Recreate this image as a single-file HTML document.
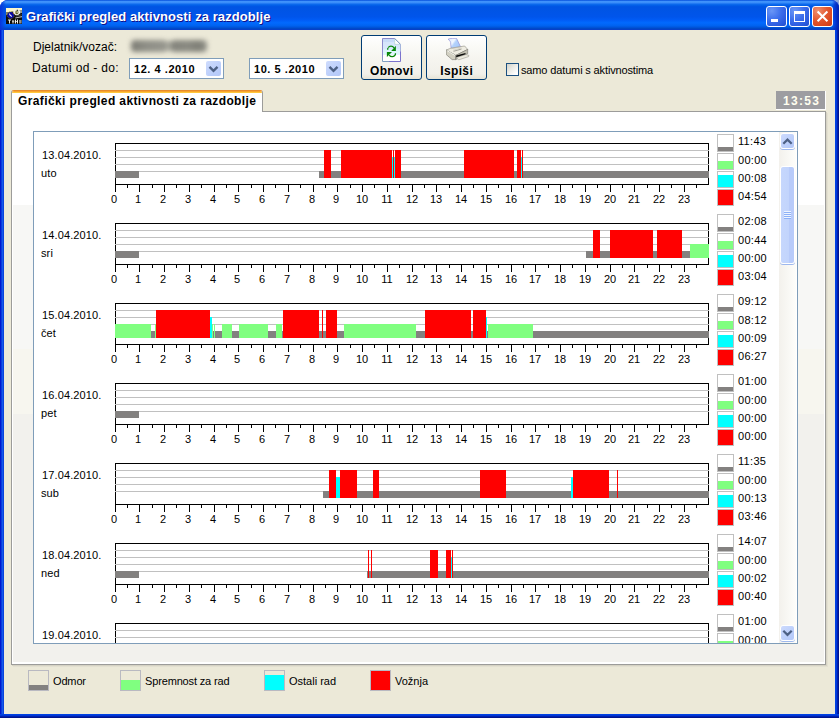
<!DOCTYPE html>
<html><head><meta charset="utf-8"><title>Grafički pregled aktivnosti za razdoblje</title>
<style>
html,body{margin:0;padding:0;}
body{width:839px;height:718px;overflow:hidden;background:#fff;font-family:"Liberation Sans",sans-serif;font-size:11px;color:#000;position:relative;}
div,i,b,s,u,em,span{box-sizing:border-box;}
#win{position:absolute;left:0;top:0;width:839px;height:718px;background:#0831d9;border-radius:8px 8px 0 0;overflow:hidden;}
#tb{position:absolute;left:0;top:0;width:839px;height:30px;background:linear-gradient(to bottom,#0a52dc 0%,#1c6cea 2.5%,#3f92fb 5%,#3a8ef9 9%,#1f78f2 12%,#0a68ec 15%,#0260e8 18%,#0057e5 20%,#0054e3 24%,#0055eb 56%,#005bf5 66%,#026afe 76%,#0062ef 86%,#0052d6 92%,#0046c4 96%,#0a3ccc 100%);}
#tt{position:absolute;left:26px;top:9px;font-weight:bold;font-size:13px;line-height:16px;color:#fff;white-space:nowrap;text-shadow:1px 1px #0f1089;letter-spacing:0.08px;}
#bl{position:absolute;left:0;top:30px;width:4px;height:688px;background:linear-gradient(to right,#0019cf 0,#0019cf 1px,#0a3ddc 1px,#0a3ddc 2px,#1458ec 2px,#1458ec 3px,#0a44dc 3px,#0a44dc 4px);}
#br{position:absolute;left:835px;top:30px;width:4px;height:688px;background:linear-gradient(to right,#0041e2 0,#0041e2 1px,#003adb 1px,#003adb 2px,#0020b0 2px,#0020b0 3px,#00148c 3px,#00148c 4px);}
#bb{position:absolute;left:0;top:714px;width:839px;height:4px;background:linear-gradient(to bottom,#0041e2 0,#0041e2 1px,#0036d6 1px,#0036d6 2px,#0020b0 2px,#0020b0 3px,#00148c 3px,#00148c 4px);}
#cl{position:absolute;left:4px;top:30px;width:831px;height:684px;background:#ece9d8;}
.wb{position:absolute;top:6px;width:21px;height:21px;border:1px solid #fff;border-radius:3px;background:radial-gradient(circle at 25% 20%,#6a96f6 0,#3c6eec 45%,#2a58dc 80%,#2350cc 100%);}
.abs{position:absolute;}
.t12{font-size:12px;line-height:14px;white-space:nowrap;position:absolute;}
.combo{position:absolute;top:28px;width:95px;height:21px;border:1px solid #7f9db9;background:#fff;}
.combo span{position:absolute;left:4px;top:4px;font-weight:bold;font-size:11px;line-height:13px;white-space:pre;letter-spacing:0.55px;}
.combo .dd{position:absolute;left:76px;top:2px;width:15px;height:15px;border-radius:2px;background:linear-gradient(135deg,#cfdcfd 0,#bccffb 60%,#b3c7f8 100%);}
.btn{position:absolute;top:5px;width:61px;height:45px;border:1px solid #003c74;border-radius:3px;background:linear-gradient(to bottom,#ffffff 0,#fbfbf8 20%,#f6f5f0 50%,#f1f0ea 88%,#e6e3d6 100%);}
.btn span{position:absolute;left:0;width:59px;text-align:center;top:28px;font-weight:bold;font-size:12px;line-height:14px;letter-spacing:.35px;text-indent:.35px}
#tab{position:absolute;left:7px;top:60px;width:252px;height:22px;background:#ffffff;border:1px solid #9c9c9a;border-top-color:#e68b2c;border-bottom:none;border-radius:3px 3px 0 0;overflow:hidden;}
#tab:before{content:"";position:absolute;left:0;top:0;width:250px;height:2px;background:linear-gradient(to bottom,#f8a52e 0,#f8a52e 1px,#ffc73c 1px,#ffc73c 2px);}
#tab span{position:absolute;left:6px;top:3px;font-weight:bold;font-size:12px;line-height:14px;white-space:nowrap;letter-spacing:0.39px;}
#page{position:absolute;left:7px;top:81px;width:815px;height:554px;border:1px solid #9c9c9a;box-shadow:inset 0 0 0 1px #fff,inset 0 -2px 0 0 #fff,1px 1px 0 #d6d3c4,2px 2px 0 #e3e0d1;background:linear-gradient(to bottom,#ffffff 0,#ffffff 93px,#f7f7f5 93px,#f7f7f5 237px,#f7f6ef 237px,#f7f6ef 302px,#f2f1ed 302px,#f2f1ed 100%);}
#panel{position:absolute;left:29px;top:101px;width:765px;height:513px;border:1px solid #7f9db9;background:#fff;overflow:hidden;}
.row{position:absolute;left:0;width:763px;height:80px;}
.dl{position:absolute;left:8px;font-size:11px;line-height:13px;white-space:nowrap;letter-spacing:.12px;}
.ch{position:absolute;left:81px;top:0;width:594px;height:42px;
 background:
 linear-gradient(#000,#000) 0 0/594px 1px no-repeat,
 linear-gradient(#000,#000) 0 41px/594px 1px no-repeat;}
.ch:before{content:"";box-sizing:border-box;position:absolute;left:0;top:0;width:594px;height:42px;border-left:1px solid #000;border-right:1px solid #000;}
.ch:after{content:"";position:absolute;left:0;top:7px;width:594px;height:22px;background:repeating-linear-gradient(to bottom,#c0c0c0 0,#c0c0c0 1px,transparent 1px,transparent 7px);}
.ch i{position:absolute;display:block;z-index:2;}
.tk{position:absolute;left:81px;top:42px;width:595px;height:8px;}
.tk b{position:absolute;top:0;width:1px;height:7px;background:#000;}
.tk s{position:absolute;top:0;width:1px;height:3px;background:#000;}
.lb{position:absolute;left:81px;top:50px;width:595px;height:13px;}
.lb u{position:absolute;top:0;width:30px;text-align:center;text-decoration:none;font-size:11px;line-height:13px;}
.lg{position:absolute;left:683px;width:17px;height:17px;border:1px solid #c0c0c0;background:#fff;}
.lg em{position:absolute;left:0;bottom:0;width:15px;display:block;}
.lv{position:absolute;left:704px;font-size:11px;line-height:13px;white-space:nowrap;letter-spacing:.3px;}
#sb{position:absolute;left:745px;top:0;width:17px;height:511px;background:linear-gradient(to right,#f3f1ec 0,#f7f6f2 40%,#fefefb 100%);}
.sbb{position:absolute;left:0;width:17px;height:17px;}
.sbb:before{content:"";box-sizing:border-box;position:absolute;left:1px;top:1px;width:15px;height:16px;border:1px solid #fff;border-radius:3px;background:linear-gradient(135deg,#cddafd 0,#bdd0fb 55%,#b4c8f9 100%);box-shadow:0 1px 0 #9eb8ee;}
#thumb{position:absolute;left:1px;top:34px;width:15px;height:98px;border:1px solid #fff;border-radius:3px;background:linear-gradient(to right,#c6d7fd 0,#c2d4fc 60%,#b8cbfa 62%,#b8cbfa 100%);box-shadow:0 1px 0 #9eb8ee;}
.bl{position:absolute;top:640px;width:21px;height:21px;border:1px solid #b9b9c1;}
.bl em{position:absolute;left:0;bottom:0;width:19px;display:block;}
.bt{position:absolute;top:645px;font-size:11px;line-height:13px;white-space:nowrap;}
</style></head><body>
<div style="position:absolute;left:831px;top:0;width:8px;height:8px;background:#8ea6d8"></div>
<div id="win">
<div id="tb">
 <svg class="abs" style="left:6px;top:8px" width="16" height="16" viewBox="0 0 16 16">
  <rect width="16" height="16" fill="#0c0c0a"/>
  <path d="M0 0h16v2.600L9.500 2.800 6 3.800 0 4.400z" fill="#fdf8c8"/>
  <path d="M0 4.400L6 3.800 2.500 6 0 7.500z" fill="#8c8a62"/>
  <path d="M14 2.500h2v2.500h-1z" fill="#9a9a8a"/>
  <path d="M9 .9h3l2.600 2.600v1.600L12 7.300H9.500L7.200 5.100V2.900z" fill="#f3f3ec"/>
  <path d="M9.600 2.800l2.400-.3.600 2.600-1.600 1.300-1.700-.9z" fill="#6c6a20"/>
  <path d="M10.600 3.600h1.200v1.200h-1.200z" fill="#f0f0e8"/>
  <path d="M10.800 1.800h1.300v1h-1.300z" fill="#1a1a14"/>
  <path d="M3.500 3.900H6L8.100 6v2.600L6 10.600H3.500L1.200 8.600V6z" fill="#0909a2" stroke="#7e7a24" stroke-width=".7" stroke-dasharray=".9 .9"/>
  <path d="M3.400 5.600Q3.900 7.600 5.900 8.600" stroke="#e6ebff" stroke-width="1.100" fill="none"/>
  <circle cx="7.400" cy="5.200" r=".55" fill="#ea9210"/>
  <path d="M9.200 9.400L16 7.900v1.300L9.200 10.600z" fill="#b4b4ac"/>
  <path d="M10 8.100l5.800-1.300" stroke="#66665e" stroke-width=".7"/>
  <path d="M2 11.500h3v1H2zM3 11.500h1v4.100H3z" fill="#ecece4"/>
  <path d="M6 12h2.200v3.600H6z" fill="#8a8680"/><path d="M6 13.200h2.200v.8H6z" fill="#d0d0c8"/>
  <path d="M9 11.500h1v4.100H9zM11 11.500h1v4.100h-1z" fill="#f2f2ea"/><path d="M10 13h1v1h-1z" fill="#b8b8b0"/>
  <path d="M13 12h2.600v3.600H13z" fill="#8e8e8a"/>
 </svg>
 <div class="abs" style="left:0;top:0;width:6px;height:30px;background:linear-gradient(to right,rgba(8,49,217,.95) 0,rgba(8,60,220,.6) 50%,rgba(8,60,220,0) 100%)"></div><div class="abs" style="left:832px;top:0;width:7px;height:30px;background:linear-gradient(to right,rgba(6,40,200,0) 0,rgba(6,40,200,.7) 45%,rgba(2,28,170,.95) 100%)"></div>
 <div id="tt">Grafički pregled aktivnosti za razdoblje</div>
 <div class="wb" style="left:766px"><div class="abs" style="left:4px;top:12px;width:7px;height:3px;background:#fff"></div></div>
 <div class="wb" style="left:789px"><div class="abs" style="left:4px;top:4px;width:11px;height:11px;border:1px solid #fff;border-top:3px solid #fff"></div></div>
 <div class="wb" style="left:812px;background:radial-gradient(circle at 25% 20%,#ee9070 0,#e25830 45%,#d8441c 80%,#c83a18 100%)">
  <svg class="abs" style="left:0;top:0" width="19" height="19" viewBox="0 0 19 19"><path d="M4.600 4.500l9.800 9.800M14.400 4.500l-9.800 9.800" stroke="#fff" stroke-width="2" fill="none"/></svg>
 </div>
</div>
<div id="bl"></div><div id="br"></div><div id="bb"></div>
<div id="cl">
 <div class="t12" style="left:29px;top:10px">Djelatnik/vozač:</div>
 <div class="t12" style="left:28px;top:31px;letter-spacing:0.33px">Datumi od - do:</div>
 <div class="abs" style="left:118px;top:4px;width:96px;height:26px;filter:blur(2.8px)"><div class="abs" style="left:9px;top:6px;width:36px;height:12px;background:linear-gradient(to right,#7c7c74,#8e8e86 40%,#96968e);border-radius:4px"></div><div class="abs" style="left:44px;top:7px;width:6px;height:10px;background:#a6a69c"></div><div class="abs" style="left:49px;top:6px;width:36px;height:12px;background:linear-gradient(to right,#84847c,#8a8a82 50%,#7e7e76 75%,#94948c);border-radius:4px"></div></div>
 <div class="combo" style="left:125px"><span>12. 4 .2010</span><div class="dd"><svg width="15" height="15" viewBox="0 0 15 15"><path d="M3.5 5.800l4 4 4-4" stroke="#4d6185" stroke-width="2.400" fill="none"/></svg></div></div>
 <div class="combo" style="left:245px"><span>10. 5 .2010</span><div class="dd"><svg width="15" height="15" viewBox="0 0 15 15"><path d="M3.5 5.800l4 4 4-4" stroke="#4d6185" stroke-width="2.400" fill="none"/></svg></div></div>
 <div class="btn" style="left:357px"><span>Obnovi</span>
  <svg class="abs" style="left:20px;top:2px" width="20" height="25" viewBox="0 0 20 25">
   <defs><linearGradient id="pg" x1="0" y1="0" x2="0" y2="1"><stop offset="0" stop-color="#c6daf8"/><stop offset=".14" stop-color="#c9dcf9"/><stop offset=".15" stop-color="#d6e5fb"/><stop offset=".45" stop-color="#d8e8fc"/><stop offset=".46" stop-color="#d9f3fc"/><stop offset=".7" stop-color="#e2f7fd"/><stop offset=".72" stop-color="#ffffff"/><stop offset="1" stop-color="#ffffff"/></linearGradient></defs>
   <path d="M.5 .5h12.200l5.800 5.800v17.200H.5z" fill="url(#pg)"/>
   <path d="M12.700 .5l5.800 5.800h-5.800z" fill="#ffffff"/>
   <path d="M12.700 .5v5.800h5.800" fill="none" stroke="#a8d0c8" stroke-width=".8" opacity=".7"/>
   <path d="M.5 20V.5h12.200" fill="none" stroke="#8c8ccc" stroke-width="1"/>
   <path d="M12.700 .5l5.800 5.800" fill="none" stroke="#7090b8" stroke-width="1"/>
   <path d="M18.500 6.300v7" fill="none" stroke="#a4b4dc" stroke-width="1"/>
   <path d="M18.500 13.300v10.200H7" fill="none" stroke="#7b73cd" stroke-width="1"/>
   <path d="M7 23.500H.5V20" fill="none" stroke="#80a0c0" stroke-width="1"/>
   <path d="M5.700 11.700C5.600 9.300 7.300 8.200 9 8.200c1.300 0 2.300.6 3 1.600" stroke="#088808" stroke-width="1.300" fill="none" stroke-dasharray="1.500 .6 20"/>
   <path d="M13.900 7.700v5.200H9.200z" fill="#088808"/>
   <path d="M13.500 15.200c.1 2.400-1.600 3.500-3.300 3.500-1.300 0-2.300-.6-3-1.600" stroke="#088808" stroke-width="1.300" fill="none"/>
   <path d="M4.900 19.100v-5.100h5.100z" fill="#088808"/>
  </svg>
 </div>
 <div class="btn" style="left:422px"><span>Ispiši</span>
  <svg class="abs" style="left:19px;top:2px" width="24" height="23" viewBox="0 0 24 23">
   <defs><linearGradient id="pp" x1="0" y1="0" x2="1" y2=".6"><stop offset="0" stop-color="#dce8fe"/><stop offset=".45" stop-color="#f2f7ff"/><stop offset=".6" stop-color="#b4d2fc"/><stop offset="1" stop-color="#a8c8fa"/></linearGradient></defs>
   <path d="M2 1.300C3.500 .6 5 .4 6.300 .3H10.500L14.600 8.900 5.200 10.700 4.600 4.500C4.200 2.800 3 1.800 2 1.300z" fill="url(#pp)" stroke="#9090d8" stroke-width=".7"/>
   <path d="M.2 12L5.200 10.100 18.600 8 21.700 11.400 9.700 17.400z" fill="#efede2" stroke="#8c8a80" stroke-width=".6"/>
   <path d="M5.200 10.700L14.600 8.900" stroke="#b8b6ac" stroke-width=".6"/>
   <path d="M7.500 13.300l8-2.300" stroke="#9a9890" stroke-width=".9"/>
   <path d="M7 12.300l8.500-2.400" stroke="#c8c6bc" stroke-width=".6"/>
   <path d="M.2 12V16.500L6.100 21.600H9.700V17.400z" fill="#d2d0c2" stroke="#74726a" stroke-width=".6"/>
   <path d="M.8 12.500L9.400 17.700" stroke="#fbfaf4" stroke-width=".9"/>
   <path d="M9.700 17.400L21.700 11.400V15.600L9.700 21.600z" fill="#c2c0b2" stroke="#74726a" stroke-width=".6"/>
   <path d="M10 19.600L20 16.500 22.900 17.400 22.600 18.600 12.800 21.800z" fill="#eceade" stroke="#8c8a80" stroke-width=".5"/>
   <path d="M10.200 17.500L19.500 14.900V16.300L10.200 19.200z" fill="#080808"/>
  </svg>
 </div>
 <div class="abs" style="left:502px;top:33px;width:13px;height:13px;border:1px solid #1c5180;background:linear-gradient(135deg,#d2d2ca 0,#ecece6 45%,#ffffff 85%)"></div>
 <div class="abs" style="left:517px;top:34px;font-size:11px;line-height:13px;white-space:nowrap;letter-spacing:-0.14px" id="cbt">samo datumi s aktivnostima</div>
 <div class="abs" style="left:772px;top:61px;width:50px;height:19px;background:#9d9da1;border-right:1px solid #fff;border-bottom:1px solid #fff"><span class="abs" style="left:7px;top:3px;font-weight:bold;font-size:12px;line-height:14px;color:#fffff0;letter-spacing:1.3px">13:53</span></div>
 <div id="page"></div>
 <div id="tab"><span>Grafički pregled aktivnosti za razdoblje</span></div>
 <div id="panel">
<div class="row" style="top:11px">
<div class="dl" style="top:6px">13.04.2010.</div><div class="dl" style="top:24px;left:7px">uto</div>
<div class="ch">
<i style="left:0px;width:24px;top:28px;height:7px;background:#838180"></i>
<i style="left:204px;width:5px;top:28px;height:7px;background:#838180"></i>
<i style="left:209px;width:7px;top:7px;height:28px;background:#ff0000"></i>
<i style="left:216px;width:10px;top:28px;height:7px;background:#838180"></i>
<i style="left:226px;width:51px;top:7px;height:28px;background:#ff0000"></i>
<i style="left:277px;width:1px;top:14px;height:21px;background:#00ffff"></i>
<i style="left:278px;width:1px;top:7px;height:28px;background:#ff0000"></i>
<i style="left:279px;width:1px;top:14px;height:21px;background:#00ffff"></i>
<i style="left:280px;width:6px;top:7px;height:28px;background:#ff0000"></i>
<i style="left:286px;width:63px;top:28px;height:7px;background:#838180"></i>
<i style="left:349px;width:50px;top:7px;height:28px;background:#ff0000"></i>
<i style="left:399px;width:3px;top:28px;height:7px;background:#838180"></i>
<i style="left:402px;width:4px;top:7px;height:28px;background:#ff0000"></i>
<i style="left:406px;width:1px;top:14px;height:21px;background:#00ffff"></i>
<i style="left:407px;width:1px;top:7px;height:28px;background:#ff0000"></i>
<i style="left:408px;width:186px;top:28px;height:7px;background:#838180"></i>
</div>
<div class="tk"><b style="left:0px"></b><s style="left:12px"></s><b style="left:24px"></b><s style="left:37px"></s><b style="left:49px"></b><s style="left:61px"></s><b style="left:74px"></b><s style="left:86px"></s><b style="left:99px"></b><s style="left:111px"></s><b style="left:123px"></b><s style="left:136px"></s><b style="left:148px"></b><s style="left:160px"></s><b style="left:173px"></b><s style="left:185px"></s><b style="left:198px"></b><s style="left:210px"></s><b style="left:222px"></b><s style="left:235px"></s><b style="left:247px"></b><s style="left:259px"></s><b style="left:272px"></b><s style="left:284px"></s><b style="left:297px"></b><s style="left:309px"></s><b style="left:321px"></b><s style="left:334px"></s><b style="left:346px"></b><s style="left:358px"></s><b style="left:371px"></b><s style="left:383px"></s><b style="left:396px"></b><s style="left:408px"></s><b style="left:420px"></b><s style="left:433px"></s><b style="left:445px"></b><s style="left:457px"></s><b style="left:470px"></b><s style="left:482px"></s><b style="left:495px"></b><s style="left:507px"></s><b style="left:519px"></b><s style="left:532px"></s><b style="left:544px"></b><s style="left:556px"></s><b style="left:569px"></b><s style="left:581px"></s></div>
<div class="lb"><u style="left:-16px">0</u><u style="left:8px">1</u><u style="left:33px">2</u><u style="left:58px">3</u><u style="left:83px">4</u><u style="left:107px">5</u><u style="left:132px">6</u><u style="left:157px">7</u><u style="left:182px">8</u><u style="left:206px">9</u><u style="left:232px">10</u><u style="left:257px">11</u><u style="left:282px">12</u><u style="left:306px">13</u><u style="left:331px">14</u><u style="left:356px">15</u><u style="left:381px">16</u><u style="left:405px">17</u><u style="left:430px">18</u><u style="left:455px">19</u><u style="left:480px">20</u><u style="left:504px">21</u><u style="left:529px">22</u><u style="left:554px">23</u></div>
<div class="lg" style="top:-9px;height:18px"><em style="height:4px;background:#838180"></em></div>
<div class="lv" style="top:-8px">11:43</div>
<div class="lg" style="top:10px"><em style="height:8px;background:#80ff80"></em></div>
<div class="lv" style="top:11px">00:00</div>
<div class="lg" style="top:28px"><em style="height:12px;background:#00ffff"></em></div>
<div class="lv" style="top:29px">00:08</div>
<div class="lg" style="top:46px"><em style="height:15px;background:#ff0000"></em></div>
<div class="lv" style="top:47px">04:54</div>
</div>
<div class="row" style="top:91px">
<div class="dl" style="top:6px">14.04.2010.</div><div class="dl" style="top:24px;left:7px">sri</div>
<div class="ch">
<i style="left:0px;width:24px;top:28px;height:7px;background:#838180"></i>
<i style="left:471px;width:7px;top:28px;height:7px;background:#838180"></i>
<i style="left:478px;width:7px;top:7px;height:28px;background:#ff0000"></i>
<i style="left:485px;width:10px;top:28px;height:7px;background:#838180"></i>
<i style="left:495px;width:43px;top:7px;height:28px;background:#ff0000"></i>
<i style="left:538px;width:4px;top:28px;height:7px;background:#838180"></i>
<i style="left:542px;width:25px;top:7px;height:28px;background:#ff0000"></i>
<i style="left:567px;width:8px;top:28px;height:7px;background:#838180"></i>
<i style="left:575px;width:19px;top:21px;height:14px;background:#80ff80"></i>
</div>
<div class="tk"><b style="left:0px"></b><s style="left:12px"></s><b style="left:24px"></b><s style="left:37px"></s><b style="left:49px"></b><s style="left:61px"></s><b style="left:74px"></b><s style="left:86px"></s><b style="left:99px"></b><s style="left:111px"></s><b style="left:123px"></b><s style="left:136px"></s><b style="left:148px"></b><s style="left:160px"></s><b style="left:173px"></b><s style="left:185px"></s><b style="left:198px"></b><s style="left:210px"></s><b style="left:222px"></b><s style="left:235px"></s><b style="left:247px"></b><s style="left:259px"></s><b style="left:272px"></b><s style="left:284px"></s><b style="left:297px"></b><s style="left:309px"></s><b style="left:321px"></b><s style="left:334px"></s><b style="left:346px"></b><s style="left:358px"></s><b style="left:371px"></b><s style="left:383px"></s><b style="left:396px"></b><s style="left:408px"></s><b style="left:420px"></b><s style="left:433px"></s><b style="left:445px"></b><s style="left:457px"></s><b style="left:470px"></b><s style="left:482px"></s><b style="left:495px"></b><s style="left:507px"></s><b style="left:519px"></b><s style="left:532px"></s><b style="left:544px"></b><s style="left:556px"></s><b style="left:569px"></b><s style="left:581px"></s></div>
<div class="lb"><u style="left:-16px">0</u><u style="left:8px">1</u><u style="left:33px">2</u><u style="left:58px">3</u><u style="left:83px">4</u><u style="left:107px">5</u><u style="left:132px">6</u><u style="left:157px">7</u><u style="left:182px">8</u><u style="left:206px">9</u><u style="left:232px">10</u><u style="left:257px">11</u><u style="left:282px">12</u><u style="left:306px">13</u><u style="left:331px">14</u><u style="left:356px">15</u><u style="left:381px">16</u><u style="left:405px">17</u><u style="left:430px">18</u><u style="left:455px">19</u><u style="left:480px">20</u><u style="left:504px">21</u><u style="left:529px">22</u><u style="left:554px">23</u></div>
<div class="lg" style="top:-9px;height:18px"><em style="height:4px;background:#838180"></em></div>
<div class="lv" style="top:-8px">02:08</div>
<div class="lg" style="top:10px"><em style="height:8px;background:#80ff80"></em></div>
<div class="lv" style="top:11px">00:44</div>
<div class="lg" style="top:28px"><em style="height:12px;background:#00ffff"></em></div>
<div class="lv" style="top:29px">00:00</div>
<div class="lg" style="top:46px"><em style="height:15px;background:#ff0000"></em></div>
<div class="lv" style="top:47px">03:04</div>
</div>
<div class="row" style="top:171px">
<div class="dl" style="top:6px">15.04.2010.</div><div class="dl" style="top:24px;left:7px">čet</div>
<div class="ch">
<i style="left:0px;width:36px;top:21px;height:14px;background:#80ff80"></i>
<i style="left:36px;width:4px;top:28px;height:7px;background:#838180"></i>
<i style="left:40px;width:1px;top:21px;height:14px;background:#80ff80"></i>
<i style="left:41px;width:54px;top:7px;height:28px;background:#ff0000"></i>
<i style="left:95px;width:2px;top:14px;height:21px;background:#00ffff"></i>
<i style="left:97px;width:1px;top:21px;height:14px;background:#80ff80"></i>
<i style="left:98px;width:1px;top:28px;height:7px;background:#838180"></i>
<i style="left:99px;width:1px;top:21px;height:14px;background:#80ff80"></i>
<i style="left:100px;width:7px;top:28px;height:7px;background:#838180"></i>
<i style="left:107px;width:10px;top:21px;height:14px;background:#80ff80"></i>
<i style="left:117px;width:7px;top:28px;height:7px;background:#838180"></i>
<i style="left:124px;width:29px;top:21px;height:14px;background:#80ff80"></i>
<i style="left:153px;width:8px;top:28px;height:7px;background:#838180"></i>
<i style="left:161px;width:6px;top:21px;height:14px;background:#80ff80"></i>
<i style="left:167px;width:1px;top:28px;height:7px;background:#838180"></i>
<i style="left:168px;width:36px;top:7px;height:28px;background:#ff0000"></i>
<i style="left:204px;width:3px;top:28px;height:7px;background:#838180"></i>
<i style="left:207px;width:1px;top:7px;height:28px;background:#ff0000"></i>
<i style="left:208px;width:3px;top:28px;height:7px;background:#838180"></i>
<i style="left:211px;width:11px;top:7px;height:28px;background:#ff0000"></i>
<i style="left:222px;width:7px;top:28px;height:7px;background:#838180"></i>
<i style="left:229px;width:72px;top:21px;height:14px;background:#80ff80"></i>
<i style="left:301px;width:9px;top:28px;height:7px;background:#838180"></i>
<i style="left:310px;width:46px;top:7px;height:28px;background:#ff0000"></i>
<i style="left:356px;width:2px;top:28px;height:7px;background:#838180"></i>
<i style="left:358px;width:13px;top:7px;height:28px;background:#ff0000"></i>
<i style="left:371px;width:1px;top:14px;height:21px;background:#00ffff"></i>
<i style="left:372px;width:1px;top:28px;height:7px;background:#838180"></i>
<i style="left:373px;width:45px;top:21px;height:14px;background:#80ff80"></i>
<i style="left:418px;width:176px;top:28px;height:7px;background:#838180"></i>
</div>
<div class="tk"><b style="left:0px"></b><s style="left:12px"></s><b style="left:24px"></b><s style="left:37px"></s><b style="left:49px"></b><s style="left:61px"></s><b style="left:74px"></b><s style="left:86px"></s><b style="left:99px"></b><s style="left:111px"></s><b style="left:123px"></b><s style="left:136px"></s><b style="left:148px"></b><s style="left:160px"></s><b style="left:173px"></b><s style="left:185px"></s><b style="left:198px"></b><s style="left:210px"></s><b style="left:222px"></b><s style="left:235px"></s><b style="left:247px"></b><s style="left:259px"></s><b style="left:272px"></b><s style="left:284px"></s><b style="left:297px"></b><s style="left:309px"></s><b style="left:321px"></b><s style="left:334px"></s><b style="left:346px"></b><s style="left:358px"></s><b style="left:371px"></b><s style="left:383px"></s><b style="left:396px"></b><s style="left:408px"></s><b style="left:420px"></b><s style="left:433px"></s><b style="left:445px"></b><s style="left:457px"></s><b style="left:470px"></b><s style="left:482px"></s><b style="left:495px"></b><s style="left:507px"></s><b style="left:519px"></b><s style="left:532px"></s><b style="left:544px"></b><s style="left:556px"></s><b style="left:569px"></b><s style="left:581px"></s></div>
<div class="lb"><u style="left:-16px">0</u><u style="left:8px">1</u><u style="left:33px">2</u><u style="left:58px">3</u><u style="left:83px">4</u><u style="left:107px">5</u><u style="left:132px">6</u><u style="left:157px">7</u><u style="left:182px">8</u><u style="left:206px">9</u><u style="left:232px">10</u><u style="left:257px">11</u><u style="left:282px">12</u><u style="left:306px">13</u><u style="left:331px">14</u><u style="left:356px">15</u><u style="left:381px">16</u><u style="left:405px">17</u><u style="left:430px">18</u><u style="left:455px">19</u><u style="left:480px">20</u><u style="left:504px">21</u><u style="left:529px">22</u><u style="left:554px">23</u></div>
<div class="lg" style="top:-9px;height:18px"><em style="height:4px;background:#838180"></em></div>
<div class="lv" style="top:-8px">09:12</div>
<div class="lg" style="top:10px"><em style="height:8px;background:#80ff80"></em></div>
<div class="lv" style="top:11px">08:12</div>
<div class="lg" style="top:28px"><em style="height:12px;background:#00ffff"></em></div>
<div class="lv" style="top:29px">00:09</div>
<div class="lg" style="top:46px"><em style="height:15px;background:#ff0000"></em></div>
<div class="lv" style="top:47px">06:27</div>
</div>
<div class="row" style="top:251px">
<div class="dl" style="top:6px">16.04.2010.</div><div class="dl" style="top:24px;left:7px">pet</div>
<div class="ch">
<i style="left:0px;width:24px;top:28px;height:7px;background:#838180"></i>
</div>
<div class="tk"><b style="left:0px"></b><s style="left:12px"></s><b style="left:24px"></b><s style="left:37px"></s><b style="left:49px"></b><s style="left:61px"></s><b style="left:74px"></b><s style="left:86px"></s><b style="left:99px"></b><s style="left:111px"></s><b style="left:123px"></b><s style="left:136px"></s><b style="left:148px"></b><s style="left:160px"></s><b style="left:173px"></b><s style="left:185px"></s><b style="left:198px"></b><s style="left:210px"></s><b style="left:222px"></b><s style="left:235px"></s><b style="left:247px"></b><s style="left:259px"></s><b style="left:272px"></b><s style="left:284px"></s><b style="left:297px"></b><s style="left:309px"></s><b style="left:321px"></b><s style="left:334px"></s><b style="left:346px"></b><s style="left:358px"></s><b style="left:371px"></b><s style="left:383px"></s><b style="left:396px"></b><s style="left:408px"></s><b style="left:420px"></b><s style="left:433px"></s><b style="left:445px"></b><s style="left:457px"></s><b style="left:470px"></b><s style="left:482px"></s><b style="left:495px"></b><s style="left:507px"></s><b style="left:519px"></b><s style="left:532px"></s><b style="left:544px"></b><s style="left:556px"></s><b style="left:569px"></b><s style="left:581px"></s></div>
<div class="lb"><u style="left:-16px">0</u><u style="left:8px">1</u><u style="left:33px">2</u><u style="left:58px">3</u><u style="left:83px">4</u><u style="left:107px">5</u><u style="left:132px">6</u><u style="left:157px">7</u><u style="left:182px">8</u><u style="left:206px">9</u><u style="left:232px">10</u><u style="left:257px">11</u><u style="left:282px">12</u><u style="left:306px">13</u><u style="left:331px">14</u><u style="left:356px">15</u><u style="left:381px">16</u><u style="left:405px">17</u><u style="left:430px">18</u><u style="left:455px">19</u><u style="left:480px">20</u><u style="left:504px">21</u><u style="left:529px">22</u><u style="left:554px">23</u></div>
<div class="lg" style="top:-9px;height:18px"><em style="height:4px;background:#838180"></em></div>
<div class="lv" style="top:-8px">01:00</div>
<div class="lg" style="top:10px"><em style="height:8px;background:#80ff80"></em></div>
<div class="lv" style="top:11px">00:00</div>
<div class="lg" style="top:28px"><em style="height:12px;background:#00ffff"></em></div>
<div class="lv" style="top:29px">00:00</div>
<div class="lg" style="top:46px"><em style="height:15px;background:#ff0000"></em></div>
<div class="lv" style="top:47px">00:00</div>
</div>
<div class="row" style="top:331px">
<div class="dl" style="top:6px">17.04.2010.</div><div class="dl" style="top:24px;left:7px">sub</div>
<div class="ch">
<i style="left:208px;width:6px;top:28px;height:7px;background:#838180"></i>
<i style="left:214px;width:7px;top:7px;height:28px;background:#ff0000"></i>
<i style="left:221px;width:4px;top:14px;height:21px;background:#00ffff"></i>
<i style="left:225px;width:17px;top:7px;height:28px;background:#ff0000"></i>
<i style="left:242px;width:16px;top:28px;height:7px;background:#838180"></i>
<i style="left:258px;width:6px;top:7px;height:28px;background:#ff0000"></i>
<i style="left:264px;width:101px;top:28px;height:7px;background:#838180"></i>
<i style="left:365px;width:26px;top:7px;height:28px;background:#ff0000"></i>
<i style="left:391px;width:65px;top:28px;height:7px;background:#838180"></i>
<i style="left:456px;width:2px;top:14px;height:21px;background:#00ffff"></i>
<i style="left:458px;width:36px;top:7px;height:28px;background:#ff0000"></i>
<i style="left:494px;width:8px;top:28px;height:7px;background:#838180"></i>
<i style="left:502px;width:1px;top:7px;height:28px;background:#ff0000"></i>
<i style="left:503px;width:91px;top:28px;height:7px;background:#838180"></i>
</div>
<div class="tk"><b style="left:0px"></b><s style="left:12px"></s><b style="left:24px"></b><s style="left:37px"></s><b style="left:49px"></b><s style="left:61px"></s><b style="left:74px"></b><s style="left:86px"></s><b style="left:99px"></b><s style="left:111px"></s><b style="left:123px"></b><s style="left:136px"></s><b style="left:148px"></b><s style="left:160px"></s><b style="left:173px"></b><s style="left:185px"></s><b style="left:198px"></b><s style="left:210px"></s><b style="left:222px"></b><s style="left:235px"></s><b style="left:247px"></b><s style="left:259px"></s><b style="left:272px"></b><s style="left:284px"></s><b style="left:297px"></b><s style="left:309px"></s><b style="left:321px"></b><s style="left:334px"></s><b style="left:346px"></b><s style="left:358px"></s><b style="left:371px"></b><s style="left:383px"></s><b style="left:396px"></b><s style="left:408px"></s><b style="left:420px"></b><s style="left:433px"></s><b style="left:445px"></b><s style="left:457px"></s><b style="left:470px"></b><s style="left:482px"></s><b style="left:495px"></b><s style="left:507px"></s><b style="left:519px"></b><s style="left:532px"></s><b style="left:544px"></b><s style="left:556px"></s><b style="left:569px"></b><s style="left:581px"></s></div>
<div class="lb"><u style="left:-16px">0</u><u style="left:8px">1</u><u style="left:33px">2</u><u style="left:58px">3</u><u style="left:83px">4</u><u style="left:107px">5</u><u style="left:132px">6</u><u style="left:157px">7</u><u style="left:182px">8</u><u style="left:206px">9</u><u style="left:232px">10</u><u style="left:257px">11</u><u style="left:282px">12</u><u style="left:306px">13</u><u style="left:331px">14</u><u style="left:356px">15</u><u style="left:381px">16</u><u style="left:405px">17</u><u style="left:430px">18</u><u style="left:455px">19</u><u style="left:480px">20</u><u style="left:504px">21</u><u style="left:529px">22</u><u style="left:554px">23</u></div>
<div class="lg" style="top:-9px;height:18px"><em style="height:4px;background:#838180"></em></div>
<div class="lv" style="top:-8px">11:35</div>
<div class="lg" style="top:10px"><em style="height:8px;background:#80ff80"></em></div>
<div class="lv" style="top:11px">00:00</div>
<div class="lg" style="top:28px"><em style="height:12px;background:#00ffff"></em></div>
<div class="lv" style="top:29px">00:13</div>
<div class="lg" style="top:46px"><em style="height:15px;background:#ff0000"></em></div>
<div class="lv" style="top:47px">03:46</div>
</div>
<div class="row" style="top:411px">
<div class="dl" style="top:6px">18.04.2010.</div><div class="dl" style="top:24px;left:7px">ned</div>
<div class="ch">
<i style="left:0px;width:24px;top:28px;height:7px;background:#838180"></i>
<i style="left:252px;width:1px;top:28px;height:7px;background:#838180"></i>
<i style="left:253px;width:1px;top:7px;height:28px;background:#ff0000"></i>
<i style="left:254px;width:2px;top:28px;height:7px;background:#838180"></i>
<i style="left:256px;width:1px;top:7px;height:28px;background:#ff0000"></i>
<i style="left:257px;width:58px;top:28px;height:7px;background:#838180"></i>
<i style="left:315px;width:8px;top:7px;height:28px;background:#ff0000"></i>
<i style="left:323px;width:8px;top:28px;height:7px;background:#838180"></i>
<i style="left:331px;width:5px;top:7px;height:28px;background:#ff0000"></i>
<i style="left:336px;width:1px;top:14px;height:21px;background:#00ffff"></i>
<i style="left:337px;width:1px;top:7px;height:28px;background:#ff0000"></i>
<i style="left:338px;width:256px;top:28px;height:7px;background:#838180"></i>
</div>
<div class="tk"><b style="left:0px"></b><s style="left:12px"></s><b style="left:24px"></b><s style="left:37px"></s><b style="left:49px"></b><s style="left:61px"></s><b style="left:74px"></b><s style="left:86px"></s><b style="left:99px"></b><s style="left:111px"></s><b style="left:123px"></b><s style="left:136px"></s><b style="left:148px"></b><s style="left:160px"></s><b style="left:173px"></b><s style="left:185px"></s><b style="left:198px"></b><s style="left:210px"></s><b style="left:222px"></b><s style="left:235px"></s><b style="left:247px"></b><s style="left:259px"></s><b style="left:272px"></b><s style="left:284px"></s><b style="left:297px"></b><s style="left:309px"></s><b style="left:321px"></b><s style="left:334px"></s><b style="left:346px"></b><s style="left:358px"></s><b style="left:371px"></b><s style="left:383px"></s><b style="left:396px"></b><s style="left:408px"></s><b style="left:420px"></b><s style="left:433px"></s><b style="left:445px"></b><s style="left:457px"></s><b style="left:470px"></b><s style="left:482px"></s><b style="left:495px"></b><s style="left:507px"></s><b style="left:519px"></b><s style="left:532px"></s><b style="left:544px"></b><s style="left:556px"></s><b style="left:569px"></b><s style="left:581px"></s></div>
<div class="lb"><u style="left:-16px">0</u><u style="left:8px">1</u><u style="left:33px">2</u><u style="left:58px">3</u><u style="left:83px">4</u><u style="left:107px">5</u><u style="left:132px">6</u><u style="left:157px">7</u><u style="left:182px">8</u><u style="left:206px">9</u><u style="left:232px">10</u><u style="left:257px">11</u><u style="left:282px">12</u><u style="left:306px">13</u><u style="left:331px">14</u><u style="left:356px">15</u><u style="left:381px">16</u><u style="left:405px">17</u><u style="left:430px">18</u><u style="left:455px">19</u><u style="left:480px">20</u><u style="left:504px">21</u><u style="left:529px">22</u><u style="left:554px">23</u></div>
<div class="lg" style="top:-9px;height:18px"><em style="height:4px;background:#838180"></em></div>
<div class="lv" style="top:-8px">14:07</div>
<div class="lg" style="top:10px"><em style="height:8px;background:#80ff80"></em></div>
<div class="lv" style="top:11px">00:00</div>
<div class="lg" style="top:28px"><em style="height:12px;background:#00ffff"></em></div>
<div class="lv" style="top:29px">00:02</div>
<div class="lg" style="top:46px"><em style="height:15px;background:#ff0000"></em></div>
<div class="lv" style="top:47px">00:40</div>
</div>
<div class="row" style="top:491px">
<div class="dl" style="top:6px">19.04.2010.</div><div class="dl" style="top:24px;left:7px">pon</div>
<div class="ch">
<i style="left:0px;width:24px;top:28px;height:7px;background:#838180"></i>
</div>
<div class="tk"><b style="left:0px"></b><s style="left:12px"></s><b style="left:24px"></b><s style="left:37px"></s><b style="left:49px"></b><s style="left:61px"></s><b style="left:74px"></b><s style="left:86px"></s><b style="left:99px"></b><s style="left:111px"></s><b style="left:123px"></b><s style="left:136px"></s><b style="left:148px"></b><s style="left:160px"></s><b style="left:173px"></b><s style="left:185px"></s><b style="left:198px"></b><s style="left:210px"></s><b style="left:222px"></b><s style="left:235px"></s><b style="left:247px"></b><s style="left:259px"></s><b style="left:272px"></b><s style="left:284px"></s><b style="left:297px"></b><s style="left:309px"></s><b style="left:321px"></b><s style="left:334px"></s><b style="left:346px"></b><s style="left:358px"></s><b style="left:371px"></b><s style="left:383px"></s><b style="left:396px"></b><s style="left:408px"></s><b style="left:420px"></b><s style="left:433px"></s><b style="left:445px"></b><s style="left:457px"></s><b style="left:470px"></b><s style="left:482px"></s><b style="left:495px"></b><s style="left:507px"></s><b style="left:519px"></b><s style="left:532px"></s><b style="left:544px"></b><s style="left:556px"></s><b style="left:569px"></b><s style="left:581px"></s></div>
<div class="lb"><u style="left:-16px">0</u><u style="left:8px">1</u><u style="left:33px">2</u><u style="left:58px">3</u><u style="left:83px">4</u><u style="left:107px">5</u><u style="left:132px">6</u><u style="left:157px">7</u><u style="left:182px">8</u><u style="left:206px">9</u><u style="left:232px">10</u><u style="left:257px">11</u><u style="left:282px">12</u><u style="left:306px">13</u><u style="left:331px">14</u><u style="left:356px">15</u><u style="left:381px">16</u><u style="left:405px">17</u><u style="left:430px">18</u><u style="left:455px">19</u><u style="left:480px">20</u><u style="left:504px">21</u><u style="left:529px">22</u><u style="left:554px">23</u></div>
<div class="lg" style="top:-9px;height:18px"><em style="height:4px;background:#838180"></em></div>
<div class="lv" style="top:-8px">01:00</div>
<div class="lg" style="top:10px"><em style="height:8px;background:#80ff80"></em></div>
<div class="lv" style="top:11px">00:00</div>
<div class="lg" style="top:28px"><em style="height:12px;background:#00ffff"></em></div>
<div class="lv" style="top:29px">00:00</div>
<div class="lg" style="top:46px"><em style="height:15px;background:#ff0000"></em></div>
<div class="lv" style="top:47px">00:00</div>
</div>
  <div id="sb">
   <div class="sbb" style="top:0"><svg class="abs" style="left:0;top:1px" width="17" height="16" viewBox="0 0 17 16"><path d="M4.300 10.800l4.200-4.200 4.200 4.200" stroke="#4d6185" stroke-width="2.200" fill="none"/></svg></div>
   <div id="thumb"><div class="abs" style="left:3px;top:44px;width:7px;height:8px;background:repeating-linear-gradient(to bottom,#eef4fe 0,#eef4fe 1px,#8cb0f8 1px,#8cb0f8 2px)"></div></div>
   <div class="sbb" style="top:492px"><svg class="abs" style="left:0;top:1px" width="17" height="16" viewBox="0 0 17 16"><path d="M4.300 5.700l4.200 4.200 4.200-4.200" stroke="#4d6185" stroke-width="2.200" fill="none"/></svg></div>
  </div>
 </div>
 <div class="bl" style="left:24px"><em style="height:5px;background:#838180"></em></div><div class="bt" style="left:49px;letter-spacing:-.15px">Odmor</div>
 <div class="bl" style="left:116px"><em style="height:10px;background:#80ff80"></em></div><div class="bt" style="left:141px;letter-spacing:-.15px">Spremnost za rad</div>
 <div class="bl" style="left:260px"><em style="height:15px;background:#00ffff"></em></div><div class="bt" style="left:285px">Ostali rad</div>
 <div class="bl" style="left:366px"><em style="height:19px;background:#ff0000"></em></div><div class="bt" style="left:391px">Vožnja</div>
</div>
</div>
</body></html>
